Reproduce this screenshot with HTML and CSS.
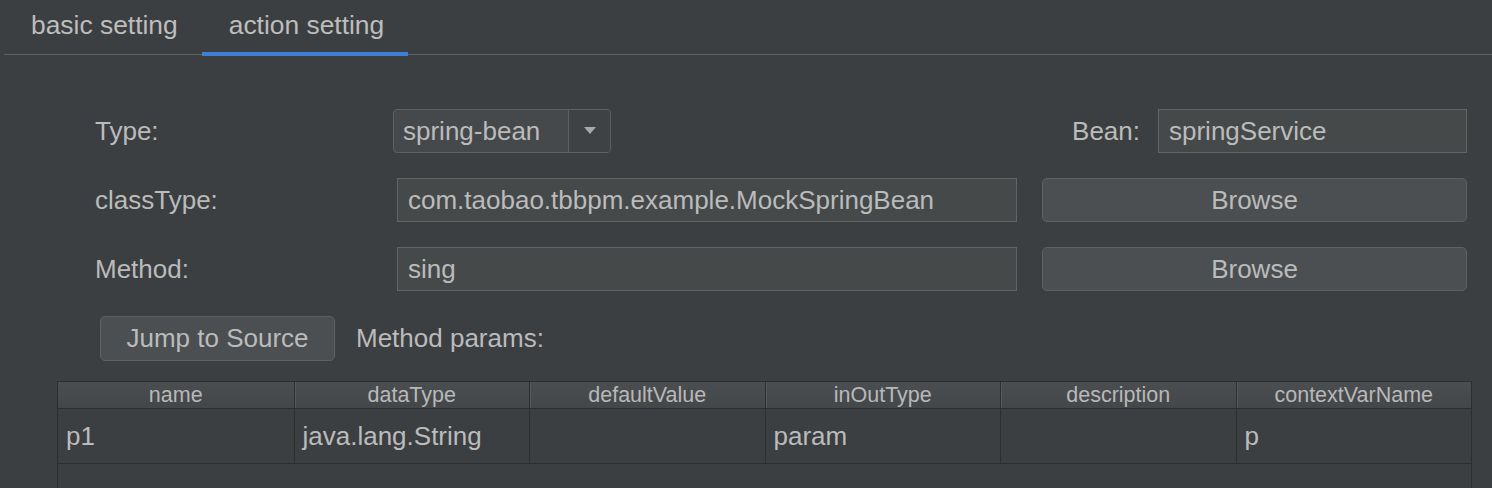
FILE: index.html
```html
<!DOCTYPE html>
<html>
<head>
<meta charset="utf-8">
<link rel="stylesheet" href="styles.css">
</head>
<body>
<div class="tabs">
  <div class="tab">basic setting</div>
  <div class="tab active">action setting</div>
</div>
<div class="form">
  <div class="grid">
    <div class="label">Type:</div>
    <div class="cell">
      <div class="combo">
        <span class="combo-text">spring-bean</span>
        <span class="combo-arrow"><svg width="12" height="8" viewBox="0 0 12 8"><path d="M0 0 L12 0 L6 7 Z" fill="#a8a8a8"/></svg></span>
      </div>
    </div>
    <div class="cell right">
      <span class="label bean-label">Bean:</span>
      <div class="field bean-field">springService</div>
    </div>

    <div class="label">classType:</div>
    <div class="cell"><div class="field wide">com.taobao.tbbpm.example.MockSpringBean</div></div>
    <div class="cell"><div class="button full">Browse</div></div>

    <div class="label">Method:</div>
    <div class="cell"><div class="field wide">sing</div></div>
    <div class="cell"><div class="button full">Browse</div></div>
  </div>
  <div class="actions">
    <div class="button jump">Jump to Source</div>
    <span class="label">Method params:</span>
  </div>
</div>
<div class="table">
  <div class="thead">
    <div class="th">name</div>
    <div class="th">dataType</div>
    <div class="th">defaultValue</div>
    <div class="th">inOutType</div>
    <div class="th">description</div>
    <div class="th">contextVarName</div>
  </div>
  <div class="trow">
    <div class="td">p1</div>
    <div class="td">java.lang.String</div>
    <div class="td"></div>
    <div class="td">param</div>
    <div class="td"></div>
    <div class="td">p</div>
  </div>
  <div class="tempty"></div>
</div>
</body>
</html>
```

FILE: styles.css
```css
html, body {
  margin: 0;
  padding: 0;
  background: #3c3f41;
  height: 488px;
  overflow: hidden;
}
body {
  font-family: "Liberation Sans", Arial, sans-serif;
  font-size: 26px;
  color: #bbbbbb;
}
.tabs {
  display: flex;
  margin-left: 4px;
  height: 54px;
  border-bottom: 1px solid #5d5f61;
}
.tab {
  position: relative;
  display: flex;
  align-items: center;
  padding: 0 24px 4px 27px;
  font-size: 26.4px;
  color: #bdbdbd;
}
.tab.active::after {
  content: "";
  position: absolute;
  left: 0;
  right: 0;
  bottom: -2px;
  height: 4px;
  background: #3d80d3;
}
.form {
  padding: 54px 25px 0 95px;
}
.grid {
  display: grid;
  grid-template-columns: 273px 624px 425px;
  grid-auto-rows: 44px;
  column-gap: 25px;
  row-gap: 25px;
}
.label {
  display: flex;
  align-items: center;
  color: #bbbbbb;
}
.cell {
  display: flex;
  align-items: stretch;
}
.cell.right {
  justify-content: flex-end;
  align-items: center;
}
.bean-label {
  margin-right: 18px;
}
.combo {
  display: flex;
  width: 218px;
  box-sizing: border-box;
  border: 1px solid #5e6163;
  border-radius: 4px;
  background: #46494b;
  overflow: hidden;
}
.combo-text {
  flex: 1;
  display: flex;
  align-items: center;
  padding-left: 9px;
}
.combo-arrow {
  width: 41px;
  display: flex;
  align-items: center;
  justify-content: center;
  border-left: 1px solid #5e6163;
  background: #3f4244;
}
.field {
  box-sizing: border-box;
  display: flex;
  align-items: center;
  background: #45494a;
  border: 1px solid #646464;
  padding-left: 10px;
  color: #bbbbbb;
  white-space: nowrap;
}
.bean-field {
  width: 309px;
  height: 44px;
}
.field.wide {
  width: 620px;
  margin-left: 4px;
}
.button {
  box-sizing: border-box;
  display: flex;
  align-items: center;
  justify-content: center;
  background: #4b4f51;
  border: 1px solid #5e6062;
  border-radius: 5px;
  color: #bbbbbb;
}
.button.full {
  width: 100%;
}
.actions {
  display: flex;
  align-items: center;
  gap: 21px;
  margin-top: 25px;
  margin-left: 5px;
  height: 45px;
}
.button.jump {
  width: 235px;
  height: 45px;
}
.table {
  margin: 20px 20px 0 57px;
  border: 1px solid #2c2e2f;
  border-bottom: none;
  height: 200px;
  background: #3c3f41;
}
.thead {
  display: grid;
  grid-template-columns: repeat(6, 1fr);
  height: 26px;
  background: linear-gradient(#4b4e50, #444749);
  border-bottom: 1px solid #2c2e2f;
}
.th {
  display: flex;
  align-items: center;
  justify-content: center;
  font-size: 21.5px;
  color: #b8b8b8;
  border-left: 1px solid #2e3031;
  box-shadow: inset 1px 0 0 #56595b;
}
.th:first-child {
  border-left: none;
  box-shadow: none;
}
.trow {
  display: grid;
  grid-template-columns: repeat(6, 1fr);
  height: 54px;
  border-bottom: 1px solid #2c2e2f;
  background: #3c3f41;
}
.td {
  display: flex;
  align-items: center;
  padding-left: 8px;
  border-left: 1px solid #2c2e2f;
  color: #bbbbbb;
}
.td:first-child {
  border-left: none;
}
.tempty {
  height: 100px;
}
```
